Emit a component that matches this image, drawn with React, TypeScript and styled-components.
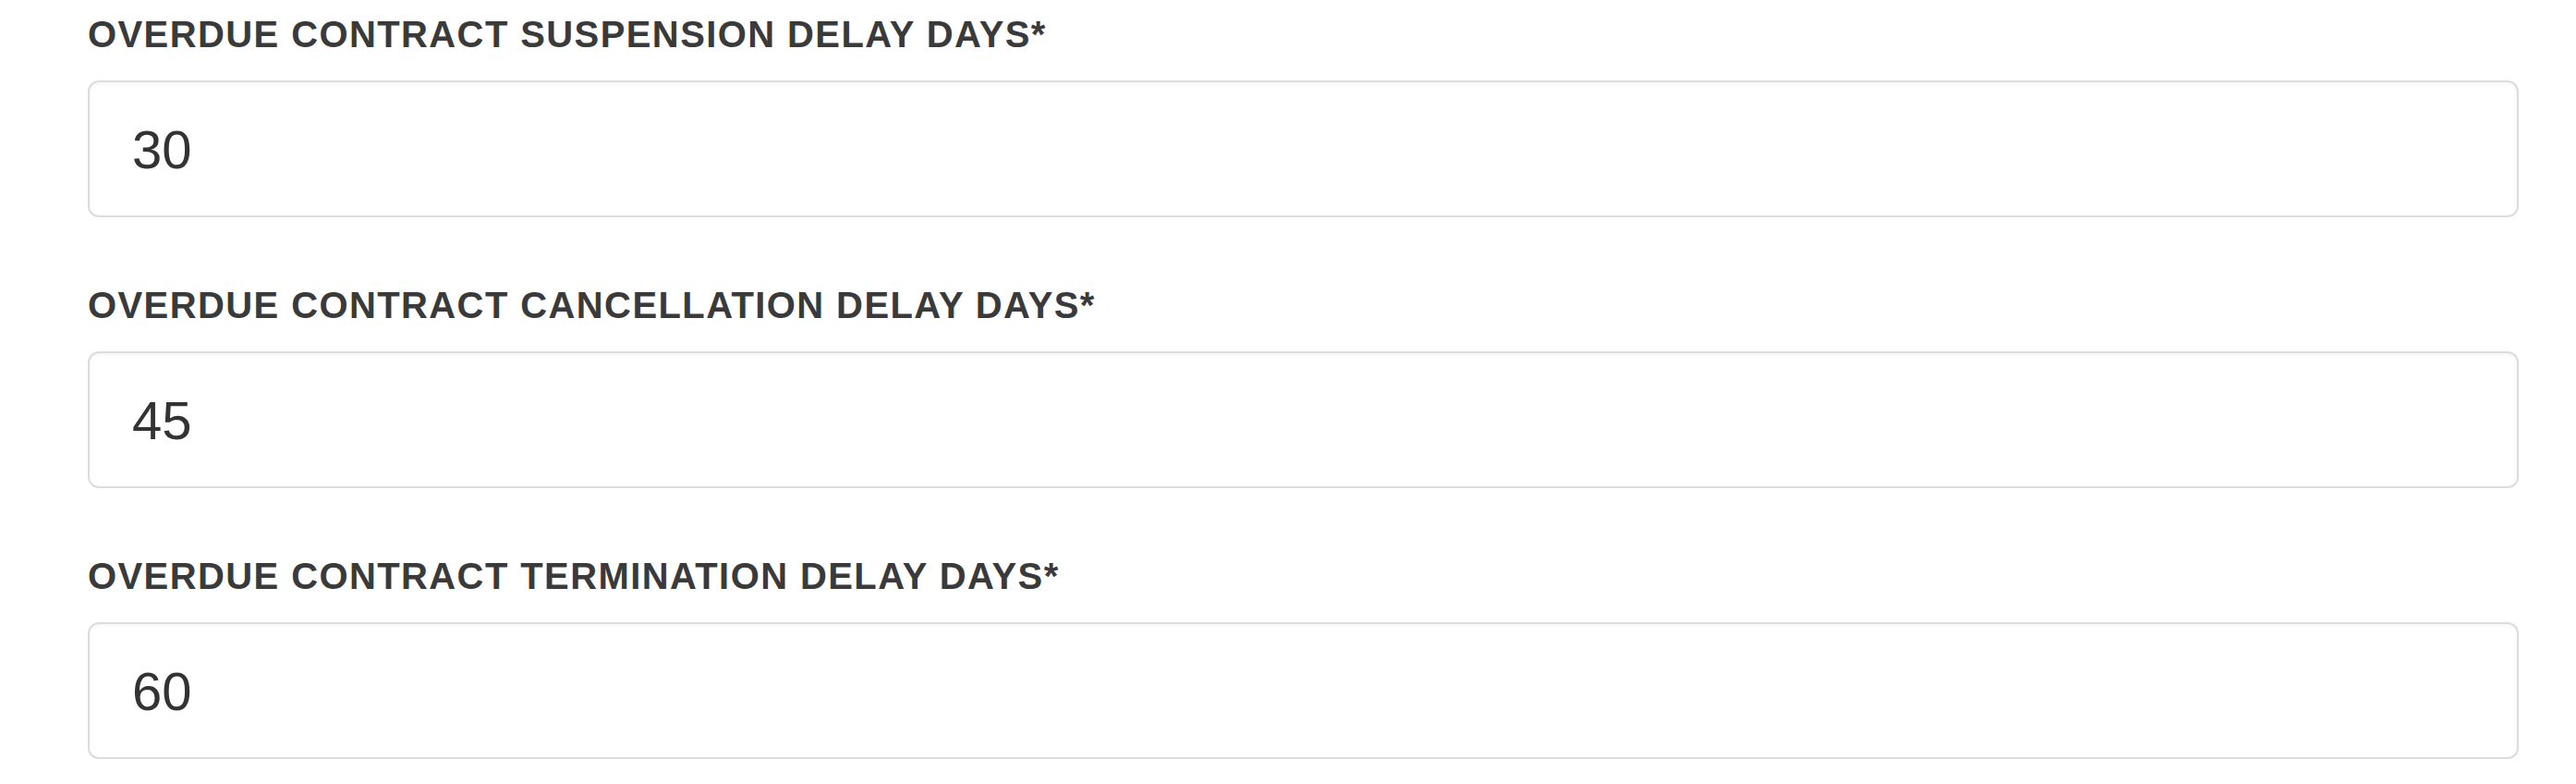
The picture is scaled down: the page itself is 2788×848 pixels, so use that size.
import React from "react";
import styled, { createGlobalStyle } from "styled-components";

const GlobalStyle = createGlobalStyle`
  html, body {
    margin: 0;
    padding: 0;
    background: #ffffff;
  }
  body {
    font-family: "Liberation Sans", Arial, sans-serif;
  }
`;

const Form = styled.form`
  display: flex;
  flex-direction: column;
  gap: 71px;
  padding: 13px 62px 0 95px;
`;

const Field = styled.div`
  display: flex;
  flex-direction: column;
  gap: 26px;
`;

const Label = styled.label`
  font-family: "Liberation Sans", Arial, sans-serif;
  font-weight: 700;
  font-size: 40px;
  line-height: 48px;
  letter-spacing: 1.4px;
  color: #3a3a3a;
  text-transform: uppercase;
`;

const Input = styled.input`
  box-sizing: border-box;
  width: 100%;
  height: 148px;
  margin: 0;
  padding: 0 46px;
  border: 2px solid #dcdcdc;
  border-radius: 12px;
  background: #ffffff;
  box-shadow: inset 0 3px 3px rgba(0, 0, 0, 0.03);
  font-family: "Liberation Sans", Arial, sans-serif;
  font-size: 58px;
  color: #333333;
  outline: none;
`;

const fields = [
  { id: "suspension", label: "Overdue Contract Suspension Delay Days*", value: "30" },
  { id: "cancellation", label: "Overdue Contract Cancellation Delay Days*", value: "45" },
  { id: "termination", label: "Overdue Contract Termination Delay Days*", value: "60" },
];

export default function App() {
  return (
    <>
      <GlobalStyle />
      <Form onSubmit={(e) => e.preventDefault()}>
        {fields.map((f) => (
          <Field key={f.id}>
            <Label htmlFor={f.id}>{f.label}</Label>
            <Input id={f.id} type="text" defaultValue={f.value} />
          </Field>
        ))}
      </Form>
    </>
  );
}
